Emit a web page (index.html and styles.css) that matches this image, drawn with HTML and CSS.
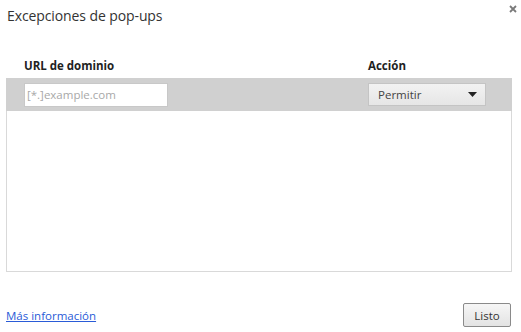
FILE: index.html
```html
<!DOCTYPE html>
<html lang="es">
<head>
<meta charset="utf-8">
<title>Excepciones de pop-ups</title>
<link rel="stylesheet" href="styles.css">
</head>
<body>
<div class="dialog">
  <div class="title">Excepciones de pop-ups</div>
  <button class="close" aria-label="Cerrar">
    <svg width="8" height="8" viewBox="0 0 8 8"><path d="M1 1L7 7M7 1L1 7" stroke="#7a7a7a" stroke-width="1.8"/></svg>
  </button>
  <div class="content">
    <div class="headers">
      <span class="h-url">URL de dominio</span>
      <span class="h-action">Acción</span>
    </div>
    <div class="table">
      <div class="row">
        <input class="url" type="text" placeholder="[*.]example.com">
        <div class="select">
          <span>Permitir</span>
          <svg width="9" height="5" viewBox="0 0 9 5"><path d="M0 0H9L4.5 5Z" fill="#222"/></svg>
        </div>
      </div>
    </div>
  </div>
  <div class="footer">
    <a class="more" href="#">Más información</a>
    <button class="done">Listo</button>
  </div>
</div>
</body>
</html>
```
FILE: styles.css
```css
html, body {
  margin: 0;
  padding: 0;
  background: #fff;
}
body {
  font-family: "Open Sans", "Noto Sans", sans-serif;
  color: #333;
}
.dialog {
  position: relative;
  width: 521px;
  height: 332px;
  display: flex;
  flex-direction: column;
  box-sizing: border-box;
}
.title {
  font-size: 14px;
  line-height: 20px;
  padding: 6px 0 0 7px;
  height: 34px;
  color: #333;
  letter-spacing: -0.1px;
}
.close {
  position: absolute;
  top: 4px;
  right: 2px;
  width: 12px;
  height: 10px;
  padding: 0;
  border: 0;
  background: none;
  display: flex;
  align-items: center;
  justify-content: center;
}
.content {
  padding: 0 9px 0 6px;
}
.headers {
  display: flex;
  height: 24px;
  align-items: flex-end;
  padding-bottom: 5px;
  box-sizing: border-box;
  font-size: 11.5px;
  font-weight: bold;
  color: #222;
  margin-top: 14px;
}
.h-url {
  width: 344px;
  padding-left: 18px;
}
.table {
  height: 194px;
  border: 1px solid #d9d9d9;
  border-top: 0;
  box-sizing: border-box;
}
.row {
  height: 33px;
  background: #d0d0d0;
  display: flex;
  align-items: center;
  margin: 0 -1px;
  padding-left: 18px;
}
.url {
  width: 144px;
  height: 24px;
  box-sizing: border-box;
  border: 1px solid #c8c8c8;
  background: #fff;
  font-family: inherit;
  font-size: 11.5px;
  padding: 0 2px;
  margin: 0;
  outline: none;
}
.url::placeholder {
  color: #a8a8a8;
}
.select {
  margin-left: 200px;
  width: 118px;
  height: 23px;
  box-sizing: border-box;
  border: 1px solid #c4c4c4;
  background: linear-gradient(#f2f2f2, #e6e6e6);
  display: flex;
  align-items: center;
  justify-content: space-between;
  padding: 0 8px 0 9px;
  font-size: 11.5px;
  color: #444;
}
.footer {
  margin-top: auto;
  display: flex;
  align-items: center;
  justify-content: space-between;
  padding: 0 10px 5px 6px;
  height: 24px;
}
.more {
  font-size: 11.5px;
  color: #2a5bd7;
  text-decoration: underline;
}
.done {
  width: 48px;
  height: 24px;
  border: 1px solid #8a8a8a;
  border-radius: 2px;
  background: linear-gradient(#f6f6f6, #e3e3e3);
  font-family: inherit;
  font-size: 11.5px;
  color: #333;
  padding: 0;
}
```
